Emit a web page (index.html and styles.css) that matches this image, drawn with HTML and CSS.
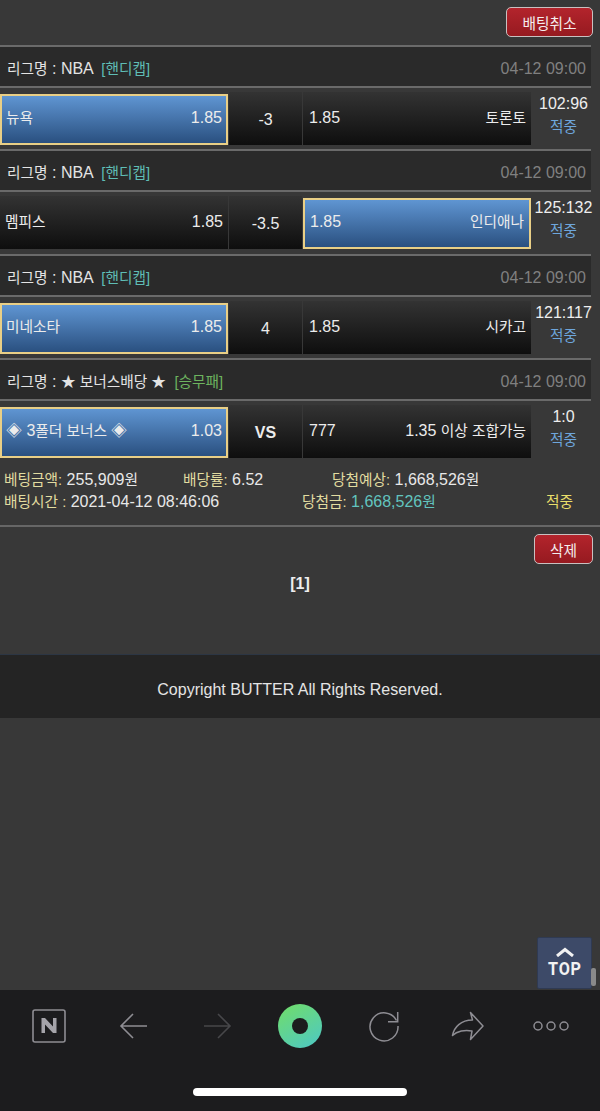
FILE: index.html
```html
<!DOCTYPE html>
<html lang="ko">
<head>
  <meta charset="UTF-8" />
  <meta name="viewport" content="width=device-width, initial-scale=1" />
  <title>BUTTER</title>
  <link rel="stylesheet" href="styles.css">
</head>
<body>
  <div class="page">
    <div class="top-actions">
      <a class="red-btn cancel-btn">배팅취소</a>
    </div>

    <div class="bet-list">
      <div class="game">
        <div class="league">
          <div><span class="ko">리그명</span> : NBA <span class="ko type-hc">[핸디캡]</span></div>
          <div class="game-date">04-12 09:00</div>
        </div>
        <div class="odds-row">
          <div class="cell home picked"><span class="ko">뉴욕</span><span>1.85</span></div>
          <div class="cell mid">-3</div>
          <div class="cell away"><span>1.85</span><span class="ko">토론토</span></div>
          <div class="result"><div>102:96</div><div class="ko hit">적중</div></div>
        </div>
      </div>

      <div class="game">
        <div class="league">
          <div><span class="ko">리그명</span> : NBA <span class="ko type-hc">[핸디캡]</span></div>
          <div class="game-date">04-12 09:00</div>
        </div>
        <div class="odds-row">
          <div class="cell home"><span class="ko">멤피스</span><span>1.85</span></div>
          <div class="cell mid">-3.5</div>
          <div class="cell away picked"><span>1.85</span><span class="ko">인디애나</span></div>
          <div class="result"><div>125:132</div><div class="ko hit">적중</div></div>
        </div>
      </div>

      <div class="game">
        <div class="league">
          <div><span class="ko">리그명</span> : NBA <span class="ko type-hc">[핸디캡]</span></div>
          <div class="game-date">04-12 09:00</div>
        </div>
        <div class="odds-row">
          <div class="cell home picked"><span class="ko">미네소타</span><span>1.85</span></div>
          <div class="cell mid">4</div>
          <div class="cell away"><span>1.85</span><span class="ko">시카고</span></div>
          <div class="result"><div>121:117</div><div class="ko hit">적중</div></div>
        </div>
      </div>

      <div class="game">
        <div class="league">
          <div><span class="ko">리그명</span> : <span class="ko">★ 보너스배당 ★</span> <span class="ko type-wl">[승무패]</span></div>
          <div class="game-date">04-12 09:00</div>
        </div>
        <div class="odds-row">
          <div class="cell home picked"><span>◈ 3<span class="ko">폴더 보너스</span> ◈</span><span>1.03</span></div>
          <div class="cell mid vs">VS</div>
          <div class="cell away"><span>777</span><span>1.35 <span class="ko">이상 조합가능</span></span></div>
          <div class="result"><div>1:0</div><div class="ko hit">적중</div></div>
        </div>
      </div>
    </div>

    <div class="summary">
      <div class="sum-line">
        <div class="sum-a"><span class="lbl">베팅금액:</span> 255,909<span class="ko">원</span></div>
        <div class="sum-b"><span class="lbl">배당률:</span> 6.52</div>
        <div class="sum-c"><span class="lbl">당첨예상:</span> 1,668,526<span class="ko">원</span></div>
      </div>
      <div class="sum-line">
        <div class="sum-d"><span class="lbl">배팅시간 :</span> 2021-04-12 08:46:06</div>
        <div class="sum-e"><span class="lbl">당첨금:</span> <span class="won">1,668,526<span class="ko">원</span></span></div>
        <div class="ko sum-f">적중</div>
      </div>
    </div>

    <div class="del-row">
      <a class="red-btn del-btn">삭제</a>
    </div>

    <div class="paging">[1]</div>

    <div class="footer">Copyright BUTTER All Rights Reserved.</div>

    <div class="spacer"></div>

    <a class="top-btn">
      <svg width="20" height="10" viewBox="0 0 20 10"><path d="M2 9 L10 2.5 L18 9" fill="none" stroke="#f2f2f2" stroke-width="3"/></svg>
      <span class="top-label">TOP</span>
    </a>
    <div class="scroll-thumb"></div>

    <div class="toolbar">
      <div class="tools">
        <svg class="tool" width="36" height="36" viewBox="0 0 36 36">
          <rect x="2" y="2" width="32" height="32" rx="2" fill="none" stroke="#8e8d93" stroke-width="1.6"/>
          <path d="M10.5 25 V10 H14 L22 18.5 V10 H25.5 V25 H22 L14 16.5 V25 Z" fill="#a5a4aa"/>
        </svg>
        <svg class="tool" width="30" height="28" viewBox="0 0 30 28">
          <path d="M28 14 H2 M14 2 L2 14 L14 26" fill="none" stroke="#8e8d93" stroke-width="1.6"/>
        </svg>
        <svg class="tool" width="30" height="28" viewBox="0 0 30 28">
          <path d="M2 14 H28 M16 2 L28 14 L16 26" fill="none" stroke="#47474a" stroke-width="1.6"/>
        </svg>
        <svg class="tool" width="44" height="44" viewBox="0 0 44 44">
          <defs>
            <linearGradient id="ring" x1="0.2" y1="0" x2="0.8" y2="1">
              <stop offset="0" stop-color="#6fdc6e"/>
              <stop offset="1" stop-color="#4fc9c0"/>
            </linearGradient>
          </defs>
          <circle cx="22" cy="22" r="22" fill="url(#ring)"/>
          <circle cx="22" cy="22" r="8" fill="#1c1c1e"/>
        </svg>
        <svg class="tool" width="32" height="32" viewBox="0 0 32 32">
          <path d="M28.5 10.5 A14 14 0 1 0 30 16" fill="none" stroke="#8e8d93" stroke-width="1.5"/>
          <path d="M29.7 2 V11.7 H20" fill="none" stroke="#8e8d93" stroke-width="1.5"/>
        </svg>
        <svg class="tool" width="34" height="30" viewBox="0 0 34 30">
          <path d="M19.5 1.5 L32 15 L19.5 28.5 L21 20 C14 18.5 6 20 1.5 24.5 C3 16 10 9 21.5 9 Z" fill="none" stroke="#8e8d93" stroke-width="1.5" stroke-linejoin="round"/>
        </svg>
        <svg class="tool" width="36" height="12" viewBox="0 0 36 12">
          <circle cx="5" cy="6" r="4" fill="none" stroke="#8e8d93" stroke-width="1.5"/>
          <circle cx="18" cy="6" r="4" fill="none" stroke="#8e8d93" stroke-width="1.5"/>
          <circle cx="31" cy="6" r="4" fill="none" stroke="#8e8d93" stroke-width="1.5"/>
        </svg>
      </div>
      <div class="home-bar"></div>
    </div>
  </div>
</body>
</html>
```

FILE: styles.css
```css
html, body {
  margin: 0;
  padding: 0;
  height: 100%;
  background: #383838;
  overflow: hidden;
  color: #eee;
  font-family: 'Liberation Sans', 'Noto Sans CJK KR', sans-serif;
  font-size: 16px;
}

.ko {
  font-size: 14.7px;
}

.page {
  position: relative;
  display: flex;
  flex-direction: column;
  height: 1111px;
  background: #383838;
}

.top-actions {
  display: flex;
  justify-content: flex-end;
  height: 44.5px;
  padding: 7px 7px 0 0;
  box-sizing: border-box;
}

.red-btn {
  display: flex;
  align-items: center;
  justify-content: center;
  box-sizing: border-box;
  height: 30px;
  border: 1.5px solid #c9c0c0;
  border-radius: 5px;
  background: linear-gradient(#b3242c, #961a20);
  color: #f4eeee;
  font-size: 14.7px;
}

.cancel-btn {
  width: 87px;
}

.del-btn {
  width: 59px;
}

.game {
  height: 104.5px;
  box-sizing: border-box;
}

.league {
  display: flex;
  justify-content: space-between;
  align-items: baseline;
  width: 591px;
  height: 43px;
  box-sizing: border-box;
  padding: 12px 5px 0 7px;
  background: #2a2a2a;
  border-top: 2px solid #6a6a6a;
  border-bottom: 2px solid #6a6a6a;
  color: #e4e4e4;
  line-height: 20px;
}

.type-hc {
  margin-left: 4px;
  color: #5fbdb5;
}

.type-wl {
  margin-left: 4px;
  color: #6db35f;
}

.game-date {
  color: #808080;
}

.odds-row {
  display: flex;
  height: 57px;
  padding-top: 4px;
  box-sizing: border-box;
}

.cell {
  display: flex;
  justify-content: space-between;
  align-items: baseline;
  box-sizing: border-box;
  height: 53px;
  padding: 16px 5px 0;
  background: linear-gradient(#333333, #0e0e0e);
  color: #ececec;
  line-height: 20px;
}

.home {
  width: 228px;
}

.mid {
  width: 73px;
  margin-left: 1px;
  justify-content: center;
  padding-top: 18px;
}

.vs {
  font-weight: bold;
}

.away {
  width: 228px;
  margin-left: 1px;
  padding: 16px 5px 0 6px;
}

.picked {
  height: 51px;
  margin-top: 2px;
  border: 2px solid #e9cf86;
  background: linear-gradient(#5f95d2, #2a5080);
  padding: 12px 4px 0;
}

.away.picked {
  padding: 12px 5px 0;
}

.result {
  flex: 1;
  display: flex;
  flex-direction: column;
  align-items: center;
  padding-top: 3px;
  gap: 5px;
  line-height: 18px;
  margin-right: 4px;
  color: #eeeeee;
}

.hit {
  color: #6ea6dc;
}

.summary {
  margin-top: -2.5px;
  height: 67px;
  box-sizing: border-box;
  padding-top: 9px;
  border-bottom: 2px solid #666;
  color: #e8e8e8;
}

.sum-line {
  display: grid;
  grid-template-columns: 183px 149px 1fr;
  height: 22px;
  line-height: 22px;
  white-space: nowrap;
}

.sum-line + .sum-line {
  grid-template-columns: 302px 244px 1fr;
}

.sum-a, .sum-d {
  padding-left: 4px;
}

.lbl {
  color: #e2dca0;
  font-size: 14.7px;
}

.won {
  color: #62c4bf;
}

.sum-f {
  color: #e8de6a;
}

.del-row {
  display: flex;
  justify-content: flex-end;
  padding: 7px 7px 0 0;
}

.paging {
  margin-top: 10px;
  text-align: center;
  font-weight: bold;
  line-height: 20px;
  color: #eeeeee;
}

.footer {
  margin-top: 60px;
  height: 63px;
  border-top: 1px solid #2c3644;
  background: #242424;
  text-align: center;
  line-height: 69px;
  color: #e4e4e4;
}

.spacer {
  flex: 1;
}

.top-btn {
  position: absolute;
  left: 537px;
  top: 937px;
  width: 55px;
  height: 52px;
  box-sizing: border-box;
  padding-top: 9px;
  border: 1px solid #2f3a52;
  border-radius: 2px;
  background: #3d4a68;
  display: flex;
  flex-direction: column;
  align-items: center;
  gap: 3px;
  color: #f2f2f2;
  font-family: 'Roboto', sans-serif;
  font-weight: bold;
  font-size: 19px;
  line-height: 18px;
  letter-spacing: 1px;
}

.top-label {
  transform: scaleX(0.85);
}

.scroll-thumb {
  position: absolute;
  left: 591px;
  top: 968px;
  width: 5px;
  height: 18px;
  border-radius: 2px;
  background: #8a8a8a;
}

.toolbar {
  height: 121px;
  background: #1c1c1e;
}

.tools {
  position: relative;
  height: 72px;
}

.tool {
  position: absolute;
}

.tool:nth-child(1) { left: 31px; top: 18px; }
.tool:nth-child(2) { left: 119px; top: 22px; }
.tool:nth-child(3) { left: 202px; top: 22px; }
.tool:nth-child(4) { left: 278px; top: 14px; }
.tool:nth-child(5) { left: 368px; top: 20px; }
.tool:nth-child(6) { left: 451px; top: 21px; }
.tool:nth-child(7) { left: 533px; top: 30px; }

.home-bar {
  width: 214px;
  height: 8px;
  margin: 26px auto 0;
  border-radius: 4px;
  background: #fff;
}
```
